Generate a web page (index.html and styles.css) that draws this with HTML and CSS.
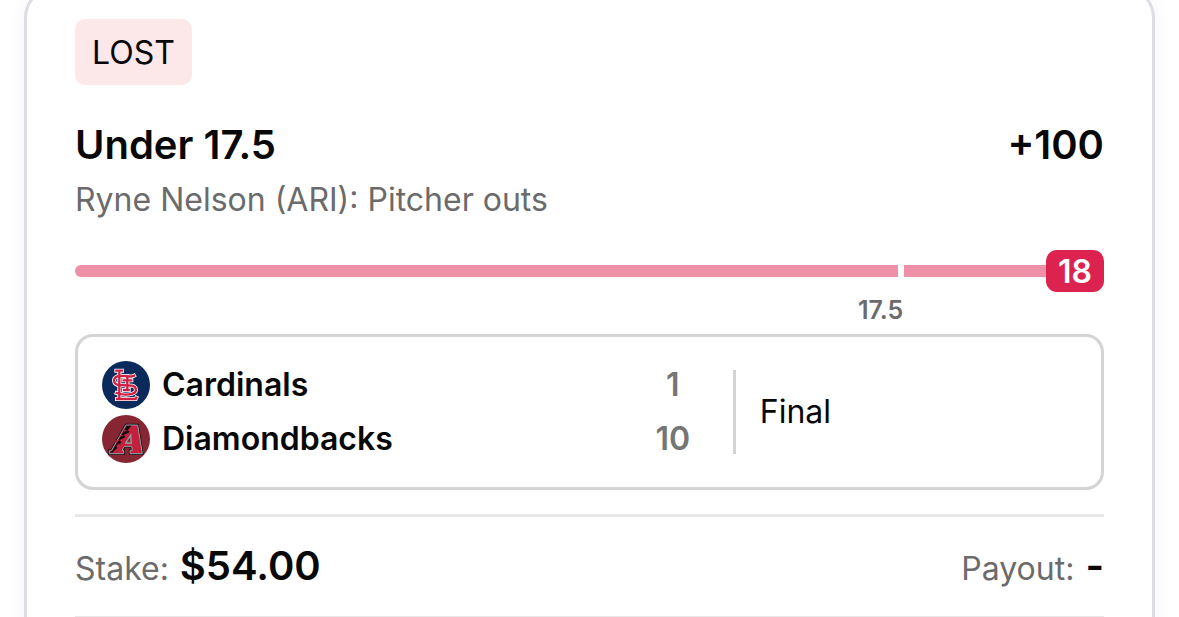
FILE: index.html
```
<!DOCTYPE html>
<html lang="en">
<head>
    <meta charset="UTF-8">
    <meta name="viewport" content="width=device-width, initial-scale=1.0">
    <title>Bet Slip</title>
    <link rel="stylesheet" href="styles.css">
</head>
<body>
    <main class="card">
        <span class="status">LOST</span>

        <div class="pick">
            <h1>Under 17.5</h1>
            <span class="odds">+100</span>
        </div>
        <p class="market">Ryne Nelson (ARI): Pitcher outs</p>

        <div class="progress">
            <div class="bar">
                <div class="bar-line" style="width: 80%"></div>
                <div class="bar-over"></div>
                <span class="bar-value">18</span>
            </div>
            <div class="bar-label" style="width: 80%">17.5</div>
        </div>

        <section class="game">
            <div class="teams">
                <div class="team">
                    <svg class="logo" viewBox="0 0 144 144" aria-hidden="true">
                        <circle cx="72" cy="72" r="72" fill="#0a2a5c"/>
                        <g fill="none" stroke="#fff" stroke-width="12" stroke-linecap="square">
                            <path d="M43 29H60M52 29V112M45 114H101L103 110"/>
                            <path d="M96 44C82 52 62 40 46 46C31 52 34 70 50 72L90 74C106 78 105 94 92 98C76 103 58 101 44 96"/>
                            <path d="M65 58H88M76 46V86M66 87H80"/>
                        </g>
                        <g fill="none" stroke="#cf1f42" stroke-width="7" stroke-linecap="square">
                            <path d="M43 29H60M52 29V112M45 114H101L103 110"/>
                            <path d="M96 44C82 52 62 40 46 46C31 52 34 70 50 72L90 74C106 78 105 94 92 98C76 103 58 101 44 96"/>
                            <path d="M65 58H88M76 46V86M66 87H80"/>
                        </g>
                    </svg>
                    <span class="name">Cardinals</span>
                    <span class="score">1</span>
                </div>
                <div class="team">
                    <svg class="logo" viewBox="0 0 144 144" aria-hidden="true">
                        <circle cx="72" cy="72" r="72" fill="#862633"/>
                        <path d="M72 30H107L121 116H84V106H91L89 94H67L60 106H65V116H22V107H28Z" fill="#c4203d" stroke="#0b0b0d" stroke-width="7"/>
                        <path d="M72 30H107L121 116H84V106H91L89 94H67L60 106H65V116H22V107H28Z" fill="#c4203d" stroke="#93a0a8" stroke-width="3"/>
                        <path d="M74 32H88L77 46L83 51L65 60L70 67L53 75L58 83L43 91L46 98L31 113H25V109H30Z" fill="#0b0b0d"/>
                        <path d="M62 43L76 46L66 50ZM50 60L65 60L54 66ZM38 77L53 75L43 83Z" fill="#c4203d"/>
                        <path d="M86 60L71 84H88Z" fill="#862633" stroke="#93a0a8" stroke-width="4"/>
                    </svg>
                    <span class="name">Diamondbacks</span>
                    <span class="score">10</span>
                </div>
            </div>
            <div class="state">Final</div>
        </section>

        <div class="totals">
            <div class="total">Stake: <strong>$54.00</strong></div>
            <div class="total">Payout: <strong>-</strong></div>
        </div>
    </main>
</body>
</html>
```
FILE: styles.css
```
* {
    box-sizing: border-box;
}

body {
    margin: 0;
    background: #fff;
    color: #080808;
    font-family: Inter, "Liberation Sans", sans-serif;
    font-size: 32px;
    line-height: 40px;
    overflow: hidden;
}

h1,
p {
    margin: 0;
}

.card {
    margin: -14px 24px 0;
    padding: 30px 48px 48px;
    border: 3px solid #dcdee4;
    border-radius: 32px;
    box-shadow: 0 0 18px rgba(60, 80, 160, 0.06);
}

.status {
    display: block;
    width: fit-content;
    padding: 14px 17px 12px;
    border-radius: 10px;
    background: #fce7e9;
}

.pick {
    display: flex;
    justify-content: space-between;
    margin-top: 36px;
    line-height: 48px;
}

.pick h1,
.odds {
    font-size: 40px;
    font-weight: 600;
}

.market {
    margin-top: 11px;
    color: #6b6b6b;
}

.progress {
    margin-top: 30px;
}

.bar {
    display: flex;
    align-items: center;
}

.bar-line,
.bar-over {
    height: 12px;
    background: #ee90a7;
}

.bar-line {
    flex-shrink: 0;
    border-radius: 6px 0 0 6px;
}

.bar-over {
    flex: 1;
    margin-left: 6px;
}

.bar-value {
    width: 58px;
    padding-top: 2px;
    border-radius: 11px;
    background: #dc2350;
    color: #fff;
    font-weight: 600;
    text-align: center;
}

.bar-label {
    box-sizing: content-box;
    padding-left: 5px;
    color: #6b6b6b;
    font-size: 25px;
    font-weight: 600;
    line-height: 36px;
    text-align: right;
}

.game {
    display: flex;
    align-items: center;
    margin-top: 6px;
    padding: 24px;
    border: 3px solid #d4d4d4;
    border-radius: 18px;
}

.teams {
    display: grid;
    gap: 6px;
    width: calc(65% - 3px);
}

.team {
    display: flex;
    align-items: center;
    gap: 12px;
}

.logo {
    width: 48px;
    height: 48px;
}

.name {
    flex: 1;
    font-weight: 600;
}

.score {
    width: 36px;
    margin-right: 42px;
    color: #757575;
    font-weight: 600;
    text-align: center;
}

.state {
    padding-left: 24px;
    border-left: 3px solid #d4d4d4;
    line-height: 84px;
}

.totals {
    display: flex;
    justify-content: space-between;
    margin-top: 24px;
    padding: 25px 0 23px;
    border: solid #e8e8e8;
    border-width: 3px 0;
    color: #6b6b6b;
    line-height: 48px;
}

.total strong {
    margin-left: 2px;
    color: #080808;
    font-size: 40px;
    font-weight: 600;
}
```
